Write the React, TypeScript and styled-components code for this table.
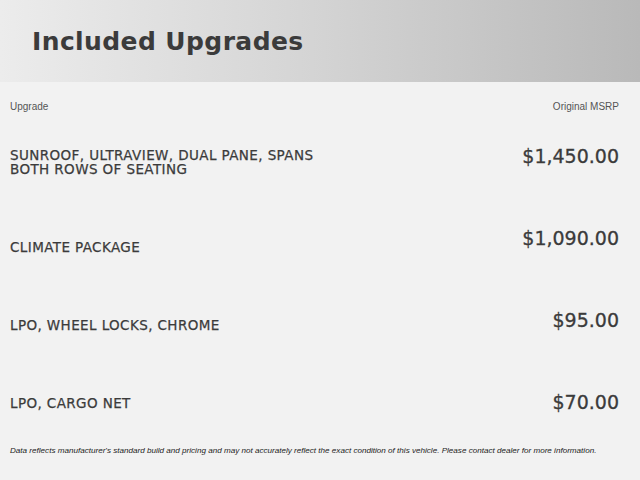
import React from "react";
import styled, { createGlobalStyle } from "styled-components";

const Global = createGlobalStyle`
  html, body { margin: 0; padding: 0; background: #f2f2f2; }
  body { width: 640px; height: 480px; overflow: hidden; }
`;

const Page = styled.div`
  width: 640px;
  height: 480px;
  display: flex;
  flex-direction: column;
  background: #f2f2f2;
`;

const Header = styled.header`
  flex-shrink: 0;
  height: 82px;
  display: flex;
  align-items: center;
  padding-left: 32px;
  background: linear-gradient(90deg, #ececec 0%, #d6d6d6 45%, #b9b9b9 100%);
`;

const Title = styled.h1`
  margin: 0;
  font-family: "DejaVu Sans", sans-serif;
  font-weight: bold;
  font-size: 25px;
  letter-spacing: 0.4px;
  color: #3b3b3b;
`;

const ColHeads = styled.div`
  flex-shrink: 0;
  display: flex;
  justify-content: space-between;
  padding: 19px 21px 0 10px;
  font-family: "Liberation Sans", Arial, sans-serif;
  font-size: 10px;
  color: #555;
`;

const Body = styled.div`
  flex-shrink: 0;
  display: grid;
  grid-template-columns: 1fr auto;
  padding: 0 21px 0 10px;
  margin-top: 34px;
`;

const Labels = styled.div`
  display: flex;
  flex-direction: column;
`;

const Prices = styled.div`
  display: flex;
  flex-direction: column;
  align-items: flex-end;
`;

const LabelCell = styled.div<{ $h: number }>`
  height: ${(p) => p.$h}px;
  display: flex;
  align-items: flex-end;
  font-family: "DejaVu Sans", sans-serif;
  font-size: 13.5px;
  line-height: 14px;
  color: #3b3b3b;
  letter-spacing: 0.4px;
  -webkit-text-stroke: 0.25px #3b3b3b;
  max-width: 330px;
`;

const PriceCell = styled.div`
  height: 82px;
  font-family: "DejaVu Sans", sans-serif;
  font-size: 19px;
  line-height: 20px;
  color: #3b3b3b;
  -webkit-text-stroke: 0.3px #3b3b3b;
  &:last-child {
    height: auto;
  }
`;

const Footer = styled.p`
  margin: auto 0 0;
  padding: 0 10px 25px;
  font-family: "Liberation Sans", Arial, sans-serif;
  font-style: italic;
  font-size: 8.1px;
  color: #222;
`;

const items = [
  { label: "SUNROOF, ULTRAVIEW, DUAL PANE, SPANS BOTH ROWS OF SEATING", price: "$1,450.00" },
  { label: "CLIMATE PACKAGE", price: "$1,090.00" },
  { label: "LPO, WHEEL LOCKS, CHROME", price: "$95.00" },
  { label: "LPO, CARGO NET", price: "$70.00" },
];

export default function App() {
  return (
    <Page>
      <Global />
      <Header>
        <Title>Included Upgrades</Title>
      </Header>
      <ColHeads>
        <span>Upgrade</span>
        <span>Original MSRP</span>
      </ColHeads>
      <Body>
        <Labels>
          {items.map((it, i) => (
            <LabelCell key={i} $h={i === 0 ? 30 : 78}>
              {it.label}
            </LabelCell>
          ))}
        </Labels>
        <Prices>
          {items.map((it, i) => (
            <PriceCell key={i}>{it.price}</PriceCell>
          ))}
        </Prices>
      </Body>
      <Footer>
        Data reflects manufacturer's standard build and pricing and may not accurately reflect the exact condition of this vehicle. Please contact dealer for more information.
      </Footer>
    </Page>
  );
}
